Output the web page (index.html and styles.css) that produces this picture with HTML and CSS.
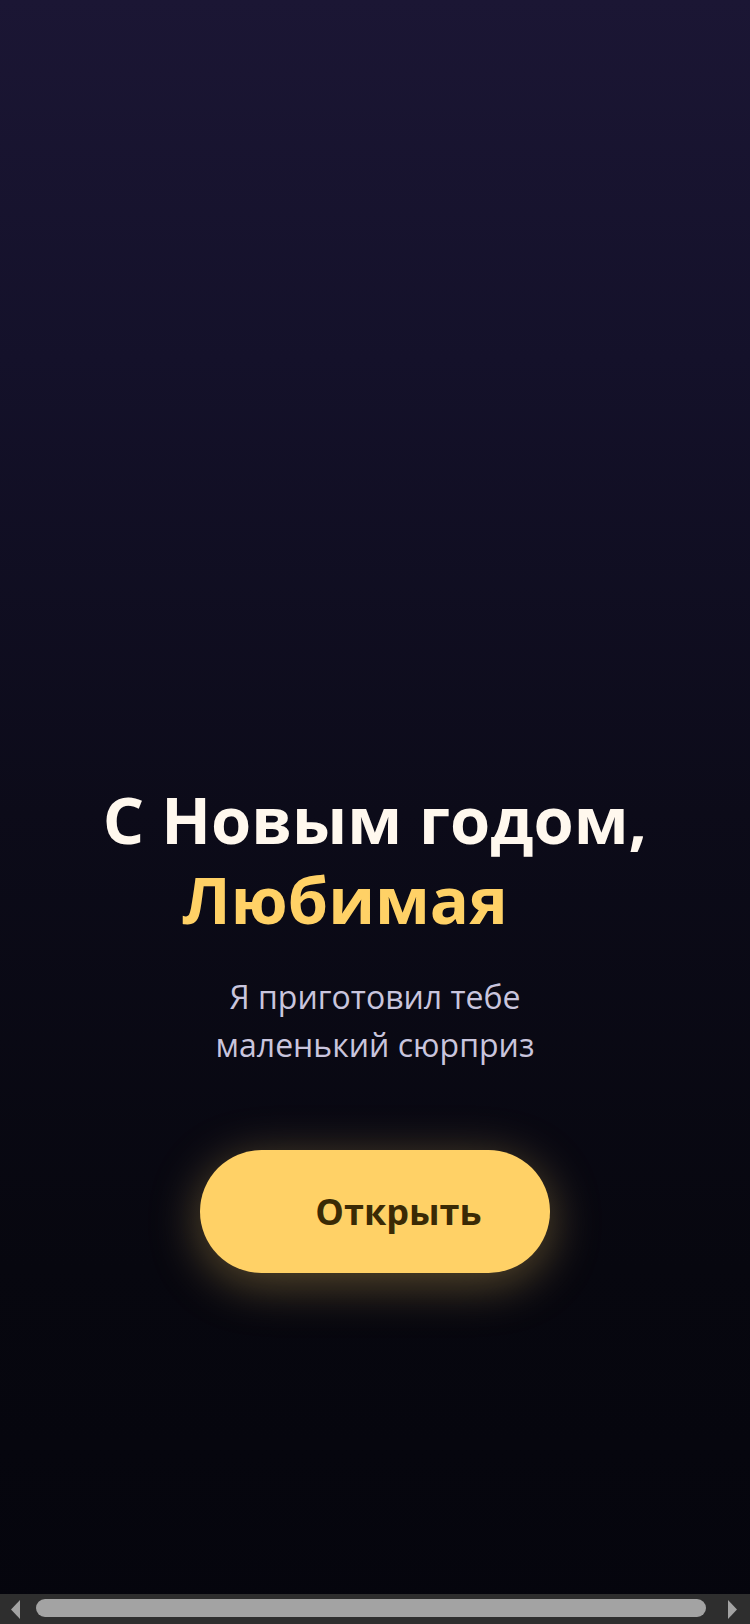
FILE: index.html
```html
<!DOCTYPE html>
<html lang="ru">
<head>
<meta charset="utf-8">
<title>С Новым годом</title>
<link rel="stylesheet" href="styles.css">
</head>
<body>
<main class="screen">
  <section class="hero">
    <h1 class="title">С Новым годом,<br><span class="name">Любимая<span class="emoji-gap"></span></span></h1>
    <p class="subtitle">Я приготовил тебе<br>маленький сюрприз</p>
    <button class="open-btn" type="button"><span class="icon-gap"></span>Открыть</button>
  </section>
</main>
<div class="hscroll" aria-hidden="true">
  <svg class="hscroll-arrow" viewBox="0 0 9 19" width="9" height="19"><polygon points="9,0 9,19 0,9.5" fill="#a3a3a3"/></svg>
  <div class="hscroll-thumb"></div>
  <svg class="hscroll-arrow" viewBox="0 0 9 19" width="9" height="19"><polygon points="0,0 0,19 9,9.5" fill="#a3a3a3"/></svg>
</div>
</body>
</html>
```

FILE: styles.css
```css
html, body {
  margin: 0;
  padding: 0;
  height: 100%;
}
html {
  overflow: hidden;
  background: #05050e;
}
body {
  font-family: "Open Sans", "Noto Sans", sans-serif;
  background: linear-gradient(180deg, #1b1634 0%, #14112a 22%, #0c0b19 50%, #07070f 78%, #05050d 100%);
}
.screen {
  min-height: 100%;
  box-sizing: border-box;
  display: flex;
  flex-direction: column;
  align-items: center;
  padding-top: 779px;
}
.hero {
  display: flex;
  flex-direction: column;
  align-items: center;
  text-align: center;
}
.title {
  margin: 0;
  font-size: 65px;
  line-height: 80px;
  font-weight: 700;
  color: #fff8ee;
}
.name {
  color: #ffd166;
}
.emoji-gap {
  display: inline-block;
  width: 60px;
}
.subtitle {
  margin: 34px 0 0;
  font-size: 32px;
  line-height: 48px;
  color: #c9c5dd;
}
.open-btn {
  margin-top: 81px;
  width: 350px;
  height: 123px;
  border: 0;
  border-radius: 62px;
  background: #ffd166;
  color: #3a2a05;
  font-family: "Open Sans", "Noto Sans", sans-serif;
  font-size: 36px;
  font-weight: 700;
  display: flex;
  align-items: center;
  justify-content: center;
  box-shadow: 0 10px 50px rgba(255, 209, 102, 0.35);
  padding: 0;
}
.icon-gap {
  display: inline-block;
  width: 47px;
}
.hscroll {
  position: fixed;
  left: 0;
  right: 0;
  bottom: 0;
  height: 30px;
  background: #2e2e2e;
  display: flex;
  align-items: center;
  padding: 0 13px 0 11px;
  box-sizing: border-box;
}
.hscroll-arrow {
  flex: none;
  display: block;
}
.hscroll-thumb {
  flex: 1;
  height: 18px;
  margin: 0 22px 2px 16px;
  border-radius: 9px;
  background: #a3a3a3;
}
```
